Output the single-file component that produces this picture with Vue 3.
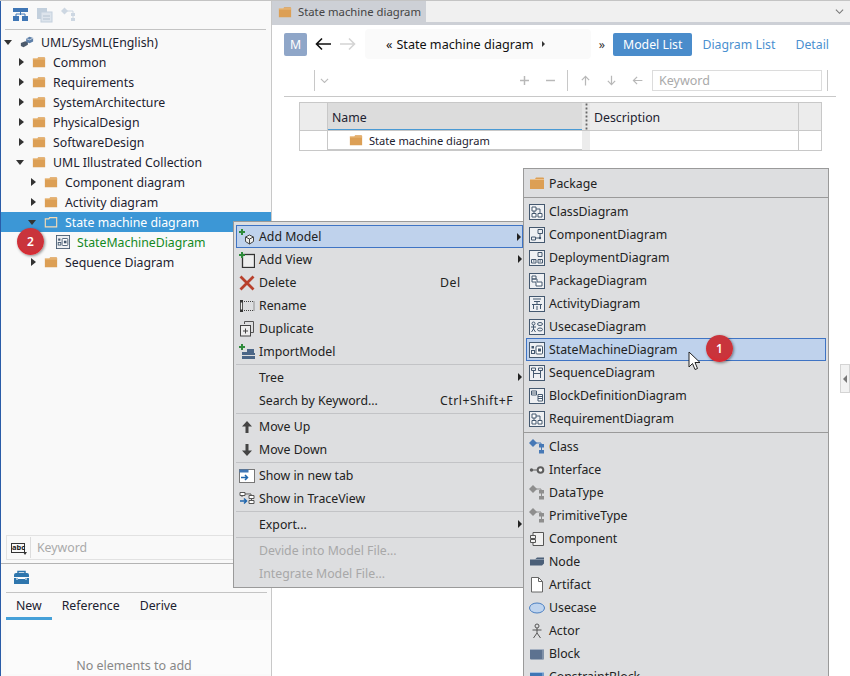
<script setup>
const icons = {
  folder: '<path d="M1 4h5l1-1.5h7a1 1 0 0 1 1 1V14H1z" fill="#dc9f55"/><path d="M1 4.500h14" stroke="#eec28c" stroke-width="1"/>',
  folderSel: '<path d="M1.500 4.500h4l1-1.500h8v10.500h-13z" fill="#3c97d6" stroke="#f7dcb4" stroke-width="1.300"/>',
  project: '<path d="M1 9l5-2 3 1v3l-5 3-3-1.500z" fill="#4c5a6c"/><path d="M7 4l4-2 4 1.500v4l-4 2-4-1.500z" fill="#5d7fa8"/><path d="M7 4l4 1.500 4-2" stroke="#cfd8e3" fill="none"/>',
  classDiagram: '<rect x=".5" y=".5" width="15" height="15" fill="#eef0f3" stroke="#44586f"/><path d="M3 3h4v4H3zM3 9.500h4v3.500H3zM9 9.500h4v3.500H9z" fill="#fff" stroke="#44586f"/><path d="M5 7v2.500M7 5h4v4.500" stroke="#44586f" fill="none"/>',
  componentDiagram: '<rect x=".5" y=".5" width="15" height="15" fill="#eef0f3" stroke="#44586f"/><path d="M9 2.500h4.500v4H9zM2.500 10h4v3h-4zM11 6.500V11H6.500" fill="none" stroke="#44586f"/><circle cx="11" cy="11" r="1.200" fill="#44586f"/>',
  deploymentDiagram: '<rect x=".5" y=".5" width="15" height="15" fill="#eef0f3" stroke="#44586f"/><path d="M9 2.500h4v4H9zM2.500 9.500h4.500v3.500H2.500zM9 9.500h4.500v3.500H9z" fill="none" stroke="#44586f"/><path d="M4 11h1.500M10.500 11H12" stroke="#44586f"/>',
  packageDiagram: '<rect x=".5" y=".5" width="15" height="15" fill="#eef0f3" stroke="#44586f"/><path d="M3 3h4v3H3zM3 6h5v3h5v4H7V9H3z" fill="#fff" stroke="#44586f"/>',
  activityDiagram: '<rect x=".5" y=".5" width="15" height="15" fill="#eef0f3" stroke="#44586f"/><path d="M4 3h8M5 5.500h6M8 5.500V8M3 8.500h10M4.500 8.500V13M11.500 8.500V13M7 11h2M7 13h2" stroke="#44586f" fill="none"/>',
  usecaseDiagram: '<rect x=".5" y=".5" width="15" height="15" fill="#eef0f3" stroke="#44586f"/><circle cx="4.500" cy="4.500" r="1.500" fill="none" stroke="#44586f"/><path d="M2 8h5M4.500 6v4L2.500 13M4.500 10l2 3" stroke="#44586f" fill="none"/><ellipse cx="11" cy="5" rx="2.500" ry="1.500" fill="none" stroke="#44586f"/><ellipse cx="11" cy="10.500" rx="2.500" ry="1.500" fill="none" stroke="#44586f"/>',
  stateDiagram: '<rect x=".5" y=".5" width="15" height="15" fill="#eef0f3" stroke="#44586f"/><rect x="7" y="4" width="6.500" height="8" rx="1" fill="#fff" stroke="#44586f"/><rect x="9" y="6.500" width="3" height="3" fill="#44586f"/><rect x="2.500" y="4" width="2.500" height="2.500" fill="#44586f"/><rect x="2.500" y="8.500" width="3" height="3" fill="none" stroke="#44586f"/>',
  sequenceDiagram: '<rect x=".5" y=".5" width="15" height="15" fill="#eef0f3" stroke="#44586f"/><path d="M2.500 3h4v2.500h-4zM9.500 3h4v2.500h-4zM4.500 5.500V13M11.500 5.500V13M4.500 8.500h7" fill="none" stroke="#44586f"/>',
  blockDiagram: '<rect x=".5" y=".5" width="15" height="15" fill="#eef0f3" stroke="#44586f"/><path d="M2.500 3h5v4h-5zM9 6.500h4.500V13H9z" fill="#fff" stroke="#44586f"/><path d="M3 5h4M9 8.500h4.500M9 10.500h4.500" stroke="#44586f"/>',
  classEl: '<path d="M0 4l4-4 4 4-4 4z" fill="#4779b6"/><path d="M10 5h5v3.500h-5zM10 11h5v3.500h-5z" fill="#4779b6"/><path d="M6 4h6v2M12.500 8v3" stroke="#4779b6" fill="none"/>',
  dataEl: '<path d="M0 4l4-4 4 4-4 4z" fill="#8e8e8e"/><path d="M10 5h5v3.500h-5zM10 11h5v3.500h-5z" fill="#8e8e8e"/><path d="M6 4h6v2M12.500 8v3" stroke="#8e8e8e" fill="none"/>',
  interface: '<circle cx="2.500" cy="8" r="1.700" fill="#5d5d5d"/><path d="M4 8h4" stroke="#5d5d5d"/><circle cx="11.500" cy="8" r="2.800" fill="#f3f3f3" stroke="#5d5d5d" stroke-width="2"/>',
  component: '<path d="M4 1.500h10.500v13H4v-3M4 8.500v-1M4 4.500v-3" fill="#f0f0f0" stroke="#555"/><path d="M1.500 4.500h5v3h-5zM1.500 8.500h5v3h-5z" fill="#f0f0f0" stroke="#555"/>',
  node: '<path d="M1 5.500h5l2-2h7v6l-2 2H1z" fill="#4b5f78"/><path d="M6 5.500h9" stroke="#8595a8"/>',
  artifact: '<path d="M2.500.5h7l4 4v10.500h-11z" fill="#fff" stroke="#666"/><path d="M9.500.5v4h4" fill="none" stroke="#666"/>',
  usecase: '<ellipse cx="8" cy="8" rx="7.500" ry="5" fill="#bfd4ee" stroke="#4a7fc2"/>',
  actor: '<circle cx="8" cy="3" r="2" fill="none" stroke="#555"/><path d="M8 5v5M3.500 7h9M8 10l-3.500 5M8 10l3.500 5" stroke="#555" fill="none"/>',
  block: '<rect x="1" y="3" width="14" height="10.500" rx="1" fill="#5d7290"/><path d="M1 3.500h14M14 3.500v10" stroke="#a5b1c2"/>',
  constraint: '<rect x="1" y="3" width="14" height="10.500" rx="1" fill="#3f76b5"/><path d="M1 3.500h14M14 3.500v10" stroke="#a5c0e0"/>',
  addModel: '<path d="M3 0v6M0 3h6" stroke="#2d8a3a" stroke-width="2"/><path d="M10.500 6l4 2v4.500l-4 2.500-4-2.500V8z" fill="#eee" stroke="#444"/><path d="M6.500 8l4 2 4-2M10.500 10v5" stroke="#444" fill="none"/>',
  addView: '<rect x="3.500" y="2.500" width="12" height="13" fill="#eee" stroke="#333" stroke-width="1.300"/><path d="M3 0v6M0 3h6" stroke="#2d8a3a" stroke-width="2"/>',
  delete: '<path d="M1.500 1.500l13 13M14.500 1.500l-13 13" stroke="#b8402c" stroke-width="2.800"/>',
  rename: '<rect x="3" y="3.500" width="12" height="9" fill="none" stroke="#444" stroke-dasharray="1 1"/><rect x="1" y="2" width="3" height="12" fill="#333"/><rect x="1.800" y="4.500" width="1.400" height="7" fill="#eee"/>',
  duplicate: '<path d="M5.500 3V.5h9v11H12" fill="none" stroke="#555"/><rect x="1.500" y="4.500" width="10" height="10.500" fill="#eee" stroke="#444"/><path d="M6.500 7.500v5M4 10h5" stroke="#444"/>',
  importModel: '<path d="M3 0v6M0 3h6" stroke="#2d8a3a" stroke-width="2"/><path d="M3 8h5V5h7v4h1v6H3z" fill="#4b6687"/><path d="M3 11.500h13" stroke="#ddd"/>',
  up: '<path d="M8 2l5 5.500H9.500V14h-3V7.500H3z" fill="#444"/>',
  down: '<path d="M8 14l5-5.500H9.500V2h-3v6.500H3z" fill="#444"/>',
  newTab: '<rect x=".5" y="1.500" width="15" height="13" fill="#fff" stroke="#777"/><rect x=".5" y="1.500" width="9" height="3" fill="#3f76b5"/><path d="M2 9.500h6M6 7l2.500 2.500L6 12" stroke="#1f66ad" stroke-width="1.500" fill="none"/>',
  trace: '<path d="M1 1.500h5v3H1zM10 4.500h5v3h-5zM10 9.500h5v3h-5zM3 4.500V6M6 3h6v1.500M12.500 7.500v2" fill="#fff" stroke="#555"/><path d="M1 10h6M5 7.500 7.500 10 5 12.500" stroke="#1f66ad" stroke-width="1.500" fill="none"/>',
  layout: '<rect x="0" y="1" width="15" height="4" fill="#3f76b5"/><rect x="0" y="9" width="6" height="5" fill="#3f76b5"/><rect x="9" y="9" width="6" height="5" fill="#3f76b5"/><path d="M7.500 5v3M3 9V7h9v2" stroke="#3f76b5" fill="none"/>',
  views: '<rect x="0" y="1" width="10" height="11" fill="#c3d0dd"/><rect x="4" y="5" width="11" height="10" fill="#dde4ec" stroke="#c3d0dd"/><path d="M6 9h7M6 12h7" stroke="#b4c2d0"/>',
  hierarchy: '<path d="M0 4l3.500-3.500L7 4 3.500 7.500z" fill="#cdd7e2"/><path d="M10 6h4v3h-4zM10 11h4v3h-4z" fill="#cdd7e2"/><path d="M6 4h6v2M12 9v2" stroke="#cdd7e2" fill="none"/>',
  toolbox: '<path d="M4 3V1.500h7V3" fill="none" stroke="#2f76ad" stroke-width="1.500"/><path d="M0 5a2 2 0 0 1 2-2h11a2 2 0 0 1 2 2v2H0zM0 8h15v6H0z" fill="#2f76ad"/><path d="M3 8v2M12 8v2M4 8.500h7" stroke="#fff"/>',
  plus: '<path d="M8 2.500v11M2.500 8h11" stroke="#b8b8b8" stroke-width="1.800"/>',
  minus: '<path d="M2.500 8h11" stroke="#b8b8b8" stroke-width="1.800"/>',
  toolUp: '<path d="M8 14V3M3.500 7.500 8 3l4.500 4.500" fill="none" stroke="#b8b8b8" stroke-width="1.500"/>',
  toolDown: '<path d="M8 2v11M3.500 8.500 8 13l4.500-4.500" fill="none" stroke="#b8b8b8" stroke-width="1.500"/>',
  toolLeft: '<path d="M14 8H3M7.500 3.500 3 8l4.500 4.500" fill="none" stroke="#b8b8b8" stroke-width="1.500"/>',
}

const tree = [
  { label: 'UML/SysML(English)', level: 0, arrow: 'open', icon: 'project' },
  { label: 'Common', level: 1, arrow: 'closed', icon: 'folder' },
  { label: 'Requirements', level: 1, arrow: 'closed', icon: 'folder' },
  { label: 'SystemArchitecture', level: 1, arrow: 'closed', icon: 'folder' },
  { label: 'PhysicalDesign', level: 1, arrow: 'closed', icon: 'folder' },
  { label: 'SoftwareDesign', level: 1, arrow: 'closed', icon: 'folder' },
  { label: 'UML Illustrated Collection', level: 1, arrow: 'open', icon: 'folder' },
  { label: 'Component diagram', level: 2, arrow: 'closed', icon: 'folder' },
  { label: 'Activity diagram', level: 2, arrow: 'closed', icon: 'folder' },
  { label: 'State machine diagram', level: 2, arrow: 'open', icon: 'folderSel', selected: true },
  { label: 'StateMachineDiagram', level: 3, arrow: '', icon: 'stateDiagram', green: true },
  { label: 'Sequence Diagram', level: 2, arrow: 'closed', icon: 'folder' },
]

const mainMenu = [
  [
    { label: 'Add Model', icon: 'addModel', sub: true, active: true },
    { label: 'Add View', icon: 'addView', sub: true },
    { label: 'Delete', icon: 'delete', key: 'Del' },
    { label: 'Rename', icon: 'rename' },
    { label: 'Duplicate', icon: 'duplicate' },
    { label: 'ImportModel', icon: 'importModel' },
  ],
  [
    { label: 'Tree', sub: true },
    { label: 'Search by Keyword...', key: 'Ctrl+Shift+F' },
  ],
  [
    { label: 'Move Up', icon: 'up' },
    { label: 'Move Down', icon: 'down' },
  ],
  [
    { label: 'Show in new tab', icon: 'newTab' },
    { label: 'Show in TraceView', icon: 'trace' },
  ],
  [{ label: 'Export...', sub: true }],
  [
    { label: 'Devide into Model File...', disabled: true },
    { label: 'Integrate Model File...', disabled: true },
  ],
]

const diagrams = [
  { label: 'ClassDiagram', icon: 'classDiagram' },
  { label: 'ComponentDiagram', icon: 'componentDiagram' },
  { label: 'DeploymentDiagram', icon: 'deploymentDiagram' },
  { label: 'PackageDiagram', icon: 'packageDiagram' },
  { label: 'ActivityDiagram', icon: 'activityDiagram' },
  { label: 'UsecaseDiagram', icon: 'usecaseDiagram' },
  { label: 'StateMachineDiagram', icon: 'stateDiagram', active: true },
  { label: 'SequenceDiagram', icon: 'sequenceDiagram' },
  { label: 'BlockDefinitionDiagram', icon: 'blockDiagram' },
  { label: 'RequirementDiagram', icon: 'classDiagram' },
]

const elements = [
  { label: 'Class', icon: 'classEl' },
  { label: 'Interface', icon: 'interface' },
  { label: 'DataType', icon: 'dataEl' },
  { label: 'PrimitiveType', icon: 'dataEl' },
  { label: 'Component', icon: 'component' },
  { label: 'Node', icon: 'node' },
  { label: 'Artifact', icon: 'artifact' },
  { label: 'Usecase', icon: 'usecase' },
  { label: 'Actor', icon: 'actor' },
  { label: 'Block', icon: 'block' },
  { label: 'ConstraintBlock', icon: 'constraint' },
]
</script>

<template>
  <div class="app">
    <aside class="left">
      <div class="left-tools">
        <svg class="ico" viewBox="0 0 16 16" v-html="icons.layout"></svg>
        <svg class="ico" viewBox="0 0 16 16" v-html="icons.views"></svg>
        <svg class="ico" viewBox="0 0 16 16" v-html="icons.hierarchy"></svg>
      </div>
      <ul class="tree">
        <li
          v-for="node in tree"
          :key="node.label"
          class="tree-row"
          :class="{ selected: node.selected, green: node.green }"
          :style="{ paddingLeft: 2 + node.level * 12 + 'px' }"
        >
          <span class="arrow" :class="node.arrow"></span>
          <svg class="ico" viewBox="0 0 16 16" v-html="icons[node.icon]"></svg>
          <span>{{ node.label }}</span>
        </li>
      </ul>
      <div class="left-search">
        <span class="abc-cell"><span class="abc">abc</span></span>
        <span class="placeholder">Keyword</span>
      </div>
      <div class="toolbox">
        <div class="toolbox-head">
          <svg class="ico" viewBox="0 0 16 16" v-html="icons.toolbox"></svg>
        </div>
        <div class="tabs">
          <span class="tab on">New</span>
          <span class="tab">Reference</span>
          <span class="tab">Derive</span>
        </div>
        <div class="toolbox-body">No elements to add</div>
      </div>
    </aside>

    <main class="right">
      <div class="tabbar">
        <div class="doc-tab">
          <svg class="ico" viewBox="0 0 16 16" v-html="icons.folder"></svg>
          <span>State machine diagram</span>
        </div>
        <svg class="tab-chevron" viewBox="0 0 10 6"><path d="M1 1l4 4 4-4" fill="none" stroke="#777" stroke-width="1.200" /></svg>
      </div>

      <div class="nav">
        <span class="m-btn">M</span>
        <svg class="nav-arrow" viewBox="0 0 16 14"><path d="M16 7H2M7 1.500 1.500 7 7 12.500" fill="none" stroke="#111" stroke-width="1.600" /></svg>
        <svg class="nav-arrow" viewBox="0 0 16 14"><path d="M0 7h14M9 1.500 14.500 7 9 12.500" fill="none" stroke="#d4d4d4" stroke-width="1.600" /></svg>
        <div class="crumb">
          <span class="crumb-mark">«</span>
          <span>State machine diagram</span>
          <span class="crumb-tri"></span>
        </div>
        <span class="more">»</span>
        <span class="view-btn on">Model List</span>
        <span class="view-btn">Diagram List</span>
        <span class="view-btn last">Detail</span>
      </div>

      <div class="listbar">
        <span class="vline first"></span>
        <svg class="small-chev" viewBox="0 0 10 6"><path d="M1 1l4 4 4-4" fill="none" stroke="#bbb" stroke-width="1.200" /></svg>
        <span class="spacer"></span>
        <span class="tool"><svg class="tool-ico" viewBox="0 0 16 16" v-html="icons.plus"></svg></span>
        <span class="tool"><svg class="tool-ico" viewBox="0 0 16 16" v-html="icons.minus"></svg></span>
        <span class="vline"></span>
        <span class="tool"><svg class="tool-ico" viewBox="0 0 16 16" v-html="icons.toolUp"></svg></span>
        <span class="tool"><svg class="tool-ico" viewBox="0 0 16 16" v-html="icons.toolDown"></svg></span>
        <span class="tool"><svg class="tool-ico" viewBox="0 0 16 16" v-html="icons.toolLeft"></svg></span>
        <span class="key-input">Keyword</span>
        <span class="vline end"></span>
      </div>

      <div class="grid">
        <div class="grid-row head">
          <span class="c0"></span>
          <span class="c1 sorted">Name</span>
          <span class="grip"></span>
          <span class="c2">Description</span>
          <span class="c3"></span>
        </div>
        <div class="grid-row">
          <span class="c0"></span>
          <span class="c1 cell-name">
            <svg class="ico" viewBox="0 0 16 16" v-html="icons.folder"></svg>
            State machine diagram
          </span>
          <span class="grip"></span>
          <span class="c2"></span>
          <span class="c3"></span>
        </div>
      </div>
    </main>

    <div class="menu main-menu">
      <template v-for="(group, g) in mainMenu" :key="g">
        <div v-if="g" class="sep"></div>
        <div
          v-for="item in group"
          :key="item.label"
          class="item"
          :class="{ active: item.active, disabled: item.disabled }"
        >
          <svg v-if="item.icon" class="ico" viewBox="0 0 16 16" v-html="icons[item.icon]"></svg>
          <span v-else class="ico"></span>
          <span class="item-label">{{ item.label }}</span>
          <span v-if="item.key" class="item-key">{{ item.key }}</span>
          <span v-if="item.sub" class="item-sub"></span>
        </div>
      </template>
    </div>

    <div class="menu sub-menu">
      <div class="item package">
        <svg class="ico" viewBox="0 0 16 16" v-html="icons.folder"></svg>
        <span class="item-label">Package</span>
      </div>
      <div class="sep"></div>
      <div v-for="item in diagrams" :key="item.label" class="item" :class="{ active: item.active }">
        <svg class="ico" viewBox="0 0 16 16" v-html="icons[item.icon]"></svg>
        <span class="item-label">{{ item.label }}</span>
      </div>
      <div class="sep"></div>
      <div v-for="item in elements" :key="item.label" class="item">
        <svg class="ico" viewBox="0 0 16 16" v-html="icons[item.icon]"></svg>
        <span class="item-label">{{ item.label }}</span>
      </div>
    </div>

    <div class="side-handle"><span></span></div>
    <span class="badge badge-1">1</span>
    <span class="badge badge-2">2</span>
    <svg class="cursor" viewBox="0 0 13 20"><path d="M1 1v15l3.500-3.500 2.500 6 2.500-1-2.500-6h5z" fill="#fff" stroke="#222" /></svg>
  </div>
</template>

<style scoped>
.app {
  position: relative;
  display: flex;
  width: 850px;
  height: 676px;
  overflow: hidden;
  background: #fff;
  color: #1c2230;
  font-family: "Noto Sans", "Liberation Sans", sans-serif;
  font-size: 12.3px;
  border-top: 1px solid #c4c4c4;
  box-sizing: border-box;
}

ul {
  list-style: none;
  margin: 0;
  padding: 0;
}

.ico {
  display: block;
  flex: none;
  width: 16px;
  height: 16px;
}

/* left column */
.left {
  display: flex;
  flex-direction: column;
  flex: none;
  width: 272px;
  box-sizing: border-box;
  background: #f9f9f9;
  border-left: 1px solid #2a5ca8;
  border-right: 1px solid #c8c8c8;
}

.left-tools {
  display: flex;
  gap: 8px;
  align-items: center;
  height: 28px;
  margin: 0 5px 0 4px;
  padding-left: 8px;
  border-bottom: 1px solid #c4c4c4;
}

.tree {
  flex: 1;
  padding-top: 2px;
}

.tree-row {
  display: flex;
  align-items: center;
  gap: 4px;
  height: 20px;
  box-sizing: border-box;
  white-space: nowrap;
}

.tree-row .ico {
  width: 14px;
  height: 14px;
  margin-right: 3px;
}

.tree-row.selected {
  background: #3c97d6;
  color: #fff;
}

.tree-row.green {
  color: #13891f;
}

.arrow {
  flex: none;
  width: 13px;
  height: 10px;
  position: relative;
}

.arrow.closed::after {
  content: "";
  position: absolute;
  left: 4px;
  top: 1px;
  border-left: 5px solid #333;
  border-top: 4px solid transparent;
  border-bottom: 4px solid transparent;
}

.arrow.open::after {
  content: "";
  position: absolute;
  left: 1px;
  top: 3px;
  border-top: 5px solid #333;
  border-left: 4px solid transparent;
  border-right: 4px solid transparent;
}

.left-search {
  display: flex;
  align-items: center;
  height: 23px;
  margin: 0 0 3px 5px;
  border: 1px solid #e2e2e2;
  border-right: none;
  color: #aaa;
}

.abc-cell {
  display: flex;
  align-items: center;
  width: 24px;
  height: 21px;
  box-sizing: border-box;
  margin-right: 6px;
  padding-left: 4px;
  border-right: 1px solid #ddd;
}

.abc {
  position: relative;
  width: 14px;
  height: 10px;
  box-sizing: border-box;
  border: 1px solid #333;
  color: #222;
  font-size: 7.5px;
  font-weight: 700;
  line-height: 7px;
  text-align: center;
}

.abc::after {
  content: "";
  position: absolute;
  right: -3px;
  bottom: -3px;
  border-top: 3px solid #333;
  border-left: 2px solid transparent;
  border-right: 2px solid transparent;
}

.toolbox {
  height: 113px;
  border-top: 1px solid #b4b4b4;
  box-sizing: border-box;
}

.toolbox-head {
  display: flex;
  align-items: center;
  height: 28px;
  margin: 0 4px 0 5px;
  padding-left: 8px;
  border-bottom: 1px solid #c4c4c4;
}

.tabs {
  display: flex;
  height: 27px;
  margin-left: 5px;
  background: #f9f9f9;
}

.tab {
  padding: 4px 10px 0;
}

.tab.on {
  border-bottom: 3px solid #45a0d8;
}

.toolbox-body {
  margin: 0 0 0 5px;
  padding: 37px 9px 0 0;
  text-align: center;
  font-size: 12.500px;
  color: #888;
  background: #fbfbfb;
}

/* right column */
.right {
  flex: 1;
  min-width: 0;
  background: #fff;
}

.tabbar {
  display: flex;
  align-items: stretch;
  justify-content: space-between;
  height: 24px;
  box-sizing: border-box;
  background: #f0f0f0;
  border-bottom: 3px solid #cdd0d6;
}

.doc-tab {
  display: flex;
  align-items: center;
  gap: 6px;
  width: 154px;
  padding-left: 6px;
  box-sizing: border-box;
  background: #cdd0d6;
  color: #444;
  font-size: 11.300px;
  white-space: nowrap;
}

.doc-tab .ico {
  width: 14px;
  height: 14px;
}

.tab-chevron {
  width: 9px;
  margin-right: 6px;
}

.nav {
  display: flex;
  align-items: center;
  height: 30px;
  margin-top: 4px;
  padding-left: 12px;
}

.m-btn {
  display: flex;
  align-items: center;
  justify-content: center;
  width: 23px;
  height: 23px;
  margin-right: 8px;
  border-radius: 2px;
  background: #8fa6c8;
  color: #fff;
}

.nav-arrow {
  width: 16px;
  height: 14px;
  margin-right: 9px;
}

.crumb {
  display: flex;
  align-items: center;
  gap: 4px;
  width: 226px;
  height: 30px;
  box-sizing: border-box;
  padding-left: 21px;
  border-radius: 4px;
  background: #fafafa;
  font-size: 12.600px;
  color: #111;
}

.crumb-tri {
  margin-left: 4px;
  border-left: 3px solid #333;
  border-top: 3px solid transparent;
  border-bottom: 3px solid transparent;
}

.more {
  width: 22px;
  text-align: center;
  color: #333;
}

.view-btn {
  padding: 0 10px;
  line-height: 23px;
  color: #4a90d0;
}

.view-btn.on {
  border-radius: 2px;
  background: #4a8ccb;
  color: #fff;
}

.listbar {
  display: flex;
  align-items: center;
  height: 27px;
  margin: 11px 14px 0 12px;
  padding-bottom: 5px;
  box-sizing: border-box;
  border-bottom: 1px solid #c8c8c8;
}

.vline {
  width: 1px;
  height: 21px;
  background: #c8c8c8;
}

.vline.first {
  margin-left: 30px;
}

.vline.end {
  margin-right: 8px;
}

.small-chev {
  width: 9px;
  margin-left: 5px;
}

.spacer {
  flex: 1;
}

.tool {
  display: flex;
  justify-content: center;
  width: 26px;
}

.tool-ico {
  width: 13px;
  height: 13px;
}

.tool + .vline {
  margin: 0 4px 0 4px;
}

.key-input {
  width: 170px;
  height: 21px;
  margin: 0 5px 0 2px;
  padding-left: 6px;
  box-sizing: border-box;
  border: 1px solid #dcdcdc;
  color: #aaa;
  line-height: 20px;
  font-size: 12.500px;
}

.grid {
  width: 523px;
  margin: 5px 0 0 27px;
  border: 1px solid #c8c8c8;
  box-sizing: border-box;
}

.grid-row {
  display: flex;
  height: 19px;
}

.grid-row.head {
  height: 27px;
  background: #ececec;
  border-bottom: 1px solid #c8c8c8;
  line-height: 30px;
}

.c0 {
  flex: none;
  width: 27px;
  border-right: 1px solid #c8c8c8;
}

.c1 {
  flex: none;
  width: 254px;
  padding-left: 4px;
  box-sizing: border-box;
}

.c1.sorted {
  background: #dcdcdc;
  border-bottom: 1px solid #4a9ad4;
}

.cell-name {
  display: flex;
  align-items: center;
  gap: 6px;
  padding-left: 21px;
  font-size: 11.100px;
  border-bottom: 1px solid #c8c8c8;
}

.cell-name .ico {
  width: 14px;
  height: 14px;
}

.grip {
  flex: none;
  width: 8px;
  background: #ececec;
}

.head .grip {
  background: radial-gradient(circle, #666 1px, transparent 1.200px) center / 3px 4px repeat-y;
  background-color: #e6e6e6;
}

.c2 {
  flex: 1;
  padding-left: 4px;
}

.c3 {
  flex: none;
  width: 23px;
  box-sizing: border-box;
  border-left: 1px solid #c8c8c8;
}

/* menus */
.menu {
  position: absolute;
  box-sizing: border-box;
  background: #dddee0;
  border: 1px solid #9a9a9a;
  color: #222;
}

.main-menu {
  left: 233px;
  top: 220px;
  width: 291px;
  height: 367px;
  padding: 3px 0 0 2px;
  z-index: 2;
}

.sub-menu {
  left: 523px;
  top: 167px;
  width: 306px;
  height: 520px;
  padding: 0 2px;
  z-index: 3;
}

.item {
  position: relative;
  display: flex;
  align-items: center;
  height: 23px;
  box-sizing: border-box;
  padding-left: 3px;
  white-space: nowrap;
}

.item .ico {
  margin-right: 4px;
}

.item.active {
  background: #bfd2ec;
  border: 1px solid #3f74c4;
  padding-left: 2px;
}

.item.disabled {
  color: #a8a8a8;
}

.item-key {
  position: absolute;
  left: 204px;
  letter-spacing: 0.5px;
}

.item-sub {
  position: absolute;
  right: 1px;
  top: 7px;
  border-left: 4px solid #222;
  border-top: 4px solid transparent;
  border-bottom: 4px solid transparent;
}

.sep {
  height: 1px;
  margin: 1px 0;
  background: #c2c3c6;
}

.package {
  height: 28px;
}

.sub-menu .sep {
  height: 1px;
  margin: 0 -2px 2px;
  background: #9a9a9a;
}

.sub-menu .item + .sep ~ .sep {
  margin: 2px -2px 2px;
}

.side-handle {
  position: absolute;
  left: 840px;
  top: 363px;
  width: 10px;
  height: 29px;
  display: flex;
  align-items: center;
  justify-content: center;
  box-sizing: border-box;
  background: #f2f2f2;
  border: 1px solid #d4d4d4;
}

.side-handle span {
  border-right: 4px solid #777;
  border-top: 4px solid transparent;
  border-bottom: 4px solid transparent;
}

.badge {
  position: absolute;
  z-index: 5;
  display: flex;
  align-items: center;
  justify-content: center;
  width: 27px;
  height: 27px;
  border-radius: 50%;
  background: radial-gradient(circle at 50% 40%, #c9343c 55%, #ec1c24 100%);
  box-shadow: 1px 1px 3px rgba(0, 0, 0, 0.45);
  color: #fff;
  font-size: 12px;
  font-weight: 600;
}

.badge-1 {
  left: 706px;
  top: 334px;
}

.badge-2 {
  left: 17px;
  top: 227px;
}

.cursor {
  position: absolute;
  z-index: 4;
  left: 688px;
  top: 350px;
  width: 13px;
  height: 20px;
}
</style>
